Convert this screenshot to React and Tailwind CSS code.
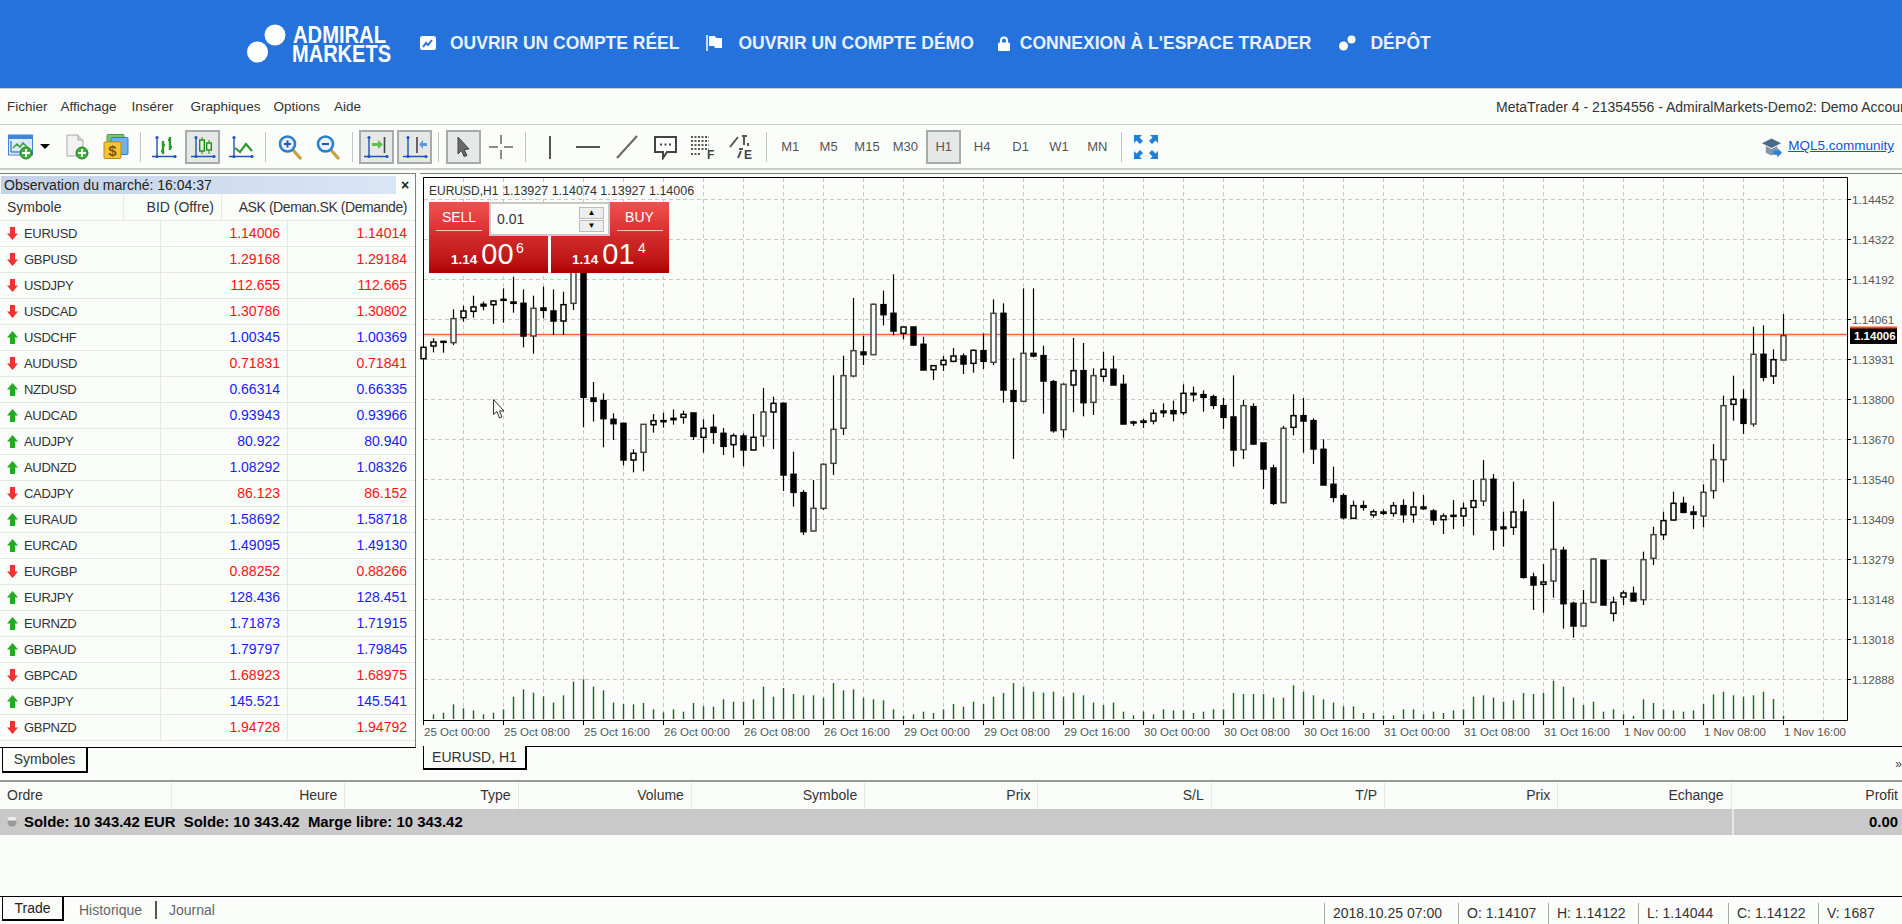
import React from 'react'

// [high, bodyTop, bodyBottom, low, filled] read off the chart, y = 240 + v / 3
const CANDLES_A = [
  [322,322,356,356,0],[295,306,318,337,0],[303,304,306,338,1],[208,236,308,315,0],[197,213,233,245,0],
  [167,201,214,233,0],[185,193,198,211,1],[182,183,194,252,0],[145,178,181,248,1],[110,186,190,218,1],
  [148,190,288,322,1],[167,205,288,341,0],[140,204,211,235,1],[148,213,243,285,1],[155,194,243,285,0],
  [60,60,190,210,0],[60,60,472,562,1],[426,474,484,545,1],[460,482,536,622,1],[520,538,551,600,1],
  [548,550,660,676,1],[628,640,660,697,0],[553,553,637,694,0],[522,542,554,578,0],[518,542,545,563,1],
  [508,535,539,554,1],[512,523,532,551,0],[518,519,589,600,1],[538,565,592,638,0],[523,562,577,612,1],
  [564,580,619,645,1],[580,587,614,653,0],[580,588,630,679,1],[522,592,630,631,0],[444,516,588,620,0],
  [470,490,516,627,0],[487,490,705,753,1],[635,703,757,800,1],[750,758,875,885,1],[720,805,873,875,0],
  [670,673,805,810,0],[406,568,670,705,0],[347,407,565,585,0],[174,332,408,412,0],[287,336,344,375,1],
  [190,193,344,345,0],[152,194,224,256,1],[103,220,273,286,1],[260,261,280,298,0],[260,261,315,318,1],
  [290,313,390,390,1],[375,377,389,420,0],[348,361,374,393,0],[324,348,364,367,0],[340,348,372,402,1],
  [328,331,370,398,0],[280,332,364,387,1],[178,220,367,375,0],[190,220,450,488,1],[354,452,484,657,1],
  [145,340,484,485,0],[145,340,348,352,1],[317,347,423,521,1],[420,425,572,578,1],[430,433,569,593,0],
  [294,392,435,517,0],[309,392,488,529,1],[385,407,487,525,0],[335,388,409,425,0],[347,388,435,435,1],
  [404,433,552,553,1],[542,546,548,558,1],[536,543,547,564,1],[508,520,543,553,0],[490,513,518,532,1],
  [482,512,521,544,1],[433,460,518,526,0],[440,460,464,485,1],[451,464,472,515,1],[464,470,496,507,1],
  [474,497,532,567,1],[406,531,630,680,1],[480,497,629,657,0],[490,500,612,615,1],[609,609,687,747,1],
  [674,684,790,795,1],[558,565,788,790,0],[463,527,562,586,0],[474,527,543,638,1],[535,542,627,672,1],
  [598,628,735,735,1],[680,733,772,787,1],[760,767,833,838,1],[782,797,835,836,0],[782,797,802,812,1],
  [808,815,825,833,0],[808,816,820,825,1],[786,797,820,830,0],[778,797,824,848,1],[755,801,824,848,0],
]

// same shape, y = 450 + v / 3
const CANDLES_B = [
  [135,171,176,180,1],[177,183,210,225,1],[190,198,209,252,0],[150,196,199,237,1],[158,175,198,230,0],
  [90,152,172,256,0],[30,88,153,168,0],[72,88,240,300,1],[185,231,236,290,1],[95,186,232,255,0],
  [148,186,382,386,1],[368,381,405,480,1],[342,396,403,488,0],[155,298,393,443,0],[290,301,461,536,1],
  [455,460,528,563,1],[420,460,528,528,0],[325,327,457,460,0],[330,331,465,465,1],[440,457,490,514,0],
  [421,429,441,465,0],[410,430,453,453,1],[305,329,449,465,0],[230,254,325,345,0],[185,212,254,270,0],
  [125,160,210,213,0],[140,160,187,190,1],[167,186,193,237,1],[103,127,198,232,0],[-18,29,122,146,0],
  [-163,-133,29,97,0],[-223,-152,-137,-88,0],[-182,-152,-80,-48,1],[-370,-287,-78,-70,0],[-374,-287,-218,-206,1],
  [-302,-271,-222,-198,0],[-408,-343,-270,-270,0],
]

const VOLUME = [
  808,793,788,763,775,781,793,788,778,740,718,728,739,758,736,695,688,710,721,758,
  762,763,759,778,787,778,785,759,769,770,748,755,755,748,710,740,714,732,736,736,
  743,699,721,718,743,748,751,778,797,793,785,789,778,762,770,755,762,740,729,699,
  710,725,728,725,740,728,736,758,765,758,785,796,784,793,778,781,781,789,785,778,
  778,729,732,732,732,743,743,706,725,736,748,758,769,769,789,789,796,796,778,778,
  793,785,789,781,778,740,736,743,755,751,729,732,729,692,710,743,765,755,785,778,
  793,797,748,759,778,781,785,781,762,733,725,736,740,736,725,747,797,
]

const PRICES = ['1.14452','1.14322','1.14192','1.14061','1.13931','1.13800','1.13670','1.13540','1.13409','1.13279','1.13148','1.13018','1.12888']

const TIMES = ['25 Oct 00:00','25 Oct 08:00','25 Oct 16:00','26 Oct 00:00','26 Oct 08:00','26 Oct 16:00','29 Oct 00:00','29 Oct 08:00','29 Oct 16:00','30 Oct 00:00','30 Oct 08:00','30 Oct 16:00','31 Oct 00:00','31 Oct 08:00','31 Oct 16:00','1 Nov 00:00','1 Nov 08:00','1 Nov 16:00']

const SYMBOLS = [
  ['EURUSD','1.14006','1.14014',0],['GBPUSD','1.29168','1.29184',0],['USDJPY','112.655','112.665',0],
  ['USDCAD','1.30786','1.30802',0],['USDCHF','1.00345','1.00369',1],['AUDUSD','0.71831','0.71841',0],
  ['NZDUSD','0.66314','0.66335',1],['AUDCAD','0.93943','0.93966',1],['AUDJPY','80.922','80.940',1],
  ['AUDNZD','1.08292','1.08326',1],['CADJPY','86.123','86.152',0],['EURAUD','1.58692','1.58718',1],
  ['EURCAD','1.49095','1.49130',1],['EURGBP','0.88252','0.88266',0],['EURJPY','128.436','128.451',1],
  ['EURNZD','1.71873','1.71915',1],['GBPAUD','1.79797','1.79845',1],['GBPCAD','1.68923','1.68975',0],
  ['GBPJPY','145.521','145.541',1],['GBPNZD','1.94728','1.94792',0],
]

const COLUMNS = ['Heure','Type','Volume','Symbole','Prix','S/L','T/P','Prix','Echange']
const STATUS = [['2018.10.25 07:00','w-[134px]'],['O: 1.14107','w-[90px]'],['H: 1.14122','w-[90px]'],['L: 1.14044','w-[90px]'],['C: 1.14122','w-[90px]'],['V: 1687','w-[84px]']]

function Plus({ x, y, r = 6 }) {
  return (
    <g>
      <circle cx={x} cy={y} r={r} fill="#3fae3a" stroke="#1f7f1f" />
      <path d={`M${x - r + 2} ${y}h${2 * r - 4}M${x} ${y - r + 2}v${2 * r - 4}`} stroke="#fff" strokeWidth="2" />
    </g>
  )
}

function Axes() {
  return (
    <g fill="#1f55b5">
      <path d="M6 3v20M1 22.5h24" stroke="#1f55b5" strokeWidth="1.4" fill="none" />
      <circle cx="6" cy="3.5" r="1.6" />
      <circle cx="6" cy="22.5" r="1.6" />
      <circle cx="24" cy="22.5" r="1.6" />
    </g>
  )
}

function Icon({ children, className = 'w-[26px] h-[26px]' }) {
  return <svg viewBox="0 0 26 26" className={className}>{children}</svg>
}

const Lens = ({ minus }) => (
  <Icon>
    <path d="M16 16l7 8" stroke="#c8a040" strokeWidth="3.4" strokeLinecap="round" />
    <circle cx="10.5" cy="10" r="7.5" fill="#eaf2fb" stroke="#2a7fd0" strokeWidth="2.6" />
    <path d={minus ? 'M7 10h7' : 'M7 10h7M10.5 6.5v7'} stroke="#1f55b5" strokeWidth="2" />
  </Icon>
)

const TOOL_ICONS = {
  newChart: (
    <Icon>
      <rect x="0.5" y="1" width="24" height="20" fill="#dceafa" stroke="#3f86d6" />
      <rect x="0.5" y="1" width="24" height="4" fill="#3f86d6" />
      <path d="M3 7v11h18" stroke="#1f55b5" fill="none" />
      <path d="M5 14l4-4 3 3 3-4 4 4" stroke="#3fa03a" strokeWidth="1.5" fill="none" />
      <Plus x="18" y="19" />
    </Icon>
  ),
  newDoc: (
    <Icon>
      <path d="M2 1h11l5 5v16H2z" fill="#f2f2f2" stroke="#a8a8a8" />
      <path d="M13 1v5h5" fill="#ddd" stroke="#a8a8a8" />
      <Plus x="17" y="19" />
    </Icon>
  ),
  money: (
    <Icon>
      <rect x="4" y="0.5" width="17" height="16" rx="1" fill="#7cc46e" stroke="#4c9b4c" />
      <rect x="8" y="3.5" width="17" height="17" rx="1" fill="#6fb2ea" stroke="#2a7fd0" />
      <rect x="1" y="8" width="17" height="16.5" rx="1" fill="#f4c437" stroke="#b98a18" />
      <text x="9.5" y="22" textAnchor="middle" fontSize="15" fontWeight="700" fill="#7a5608" fontFamily="Liberation Sans">$</text>
    </Icon>
  ),
  bars: (
    <Icon>
      <Axes />
      <path d="M12 7v13M10 17h2M12 11h2M19 3v13M17 6h2M19 13h2" stroke="#2c9a2c" strokeWidth="2.4" fill="none" />
    </Icon>
  ),
  candles: (
    <Icon>
      <Axes />
      <path d="M12 3v17M19 6v14" stroke="#1f8a1f" />
      <rect x="9.7" y="6" width="4.6" height="11" fill="#e8f3d8" stroke="#1f8a1f" strokeWidth="1.4" />
      <rect x="16.7" y="9" width="4.6" height="7" fill="#e8f3d8" stroke="#1f8a1f" strokeWidth="1.4" />
    </Icon>
  ),
  line: (
    <Icon>
      <Axes />
      <path d="M7 14l5 4 6-8 6 7" stroke="#2c9a2c" strokeWidth="2.2" fill="none" />
    </Icon>
  ),
  zoomIn: <Lens />,
  zoomOut: <Lens minus />,
  autoScroll: (
    <Icon>
      <Axes />
      <path d="M21.5 3v16" stroke="#444" strokeWidth="1.6" />
      <path d="M9 9h6V6l5 4.500-5 4.500v-3H9z" fill="#5cc04c" />
    </Icon>
  ),
  chartShift: (
    <Icon>
      <Axes />
      <path d="M15 3v16" stroke="#444" strokeWidth="1.6" />
      <path d="M25 9h-4V6l-4 4.500 4 4.500v-3h4z" fill="#5a9ae0" />
    </Icon>
  ),
  cursor: (
    <Icon>
      <path d="M8 3l11 12-5 .5 3 6-3 1-2.500-6-3.500 3.500z" fill="#6a6a6a" stroke="#444" />
    </Icon>
  ),
  cross: (
    <Icon>
      <path d="M13 1v9M13 16v9M1 13h9M16 13h9" stroke="#666" strokeWidth="1.5" />
    </Icon>
  ),
  vline: <Icon><path d="M13 2v23" stroke="#555" strokeWidth="2" /></Icon>,
  hline: <Icon><path d="M1 13h24" stroke="#555" strokeWidth="2" /></Icon>,
  trend: <Icon><path d="M3 24L23 2" stroke="#666" strokeWidth="2" /></Icon>,
  bubble: (
    <Icon>
      <path d="M3 3h21v15H15l-4 6v-6H3z" fill="#fff" stroke="#444" strokeWidth="2" />
      <path d="M8 10.500h2M12.500 10.500h2M17 10.500h2" stroke="#444" strokeWidth="2" />
    </Icon>
  ),
  fibGrid: (
    <Icon>
      <path d="M1 3h18M1 7h18M1 11h18M1 15h18M1 20h10" stroke="#555" strokeWidth="2" strokeDasharray="2 1.500" />
      <text x="17" y="25" fontSize="12" fontWeight="700" fill="#444" fontFamily="Liberation Sans">F</text>
    </Icon>
  ),
  fibE: (
    <Icon>
      <path d="M1 13L9 3M13 2h5M15 2v9M19 9v3M9 24l3-7M10 15h4" stroke="#555" strokeWidth="2" fill="none" />
      <text x="15" y="25" fontSize="12" fontWeight="700" fill="#444" fontFamily="Liberation Sans">E</text>
    </Icon>
  ),
  full: (
    <Icon>
      <path d="M1 1h8L6.500 3.500 10 7 7 10 3.500 6.500 1 9zM25 1h-8l2.500 2.500L16 7l3 3 3.500-3.500L25 9zM1 25h8l-2.500-2.500L10 19l-3-3-3.500 3.500L1 17zM25 25h-8l2.500-2.500L16 19l3-3 3.500 3.500L25 17z" fill="#1f7fdc" />
    </Icon>
  ),
}

function Tool({ icon, active }) {
  return (
    <div className="flex h-[34px] w-[38.4px] shrink-0 items-center justify-center">
      <div className={`flex h-[34px] w-[35px] items-center justify-center ${active ? 'border-2 border-[#aaaaaa] bg-[#e6e8e8]' : ''}`}>
        {TOOL_ICONS[icon]}
      </div>
    </div>
  )
}

function Period({ label, active }) {
  return (
    <div className="flex h-[34px] w-[38.4px] shrink-0 items-center justify-center">
      <div className={`flex h-[34px] w-[35px] items-center justify-center text-[13px] text-[#555] ${active ? 'border-2 border-[#aaaaaa] bg-[#e6e8e8]' : ''}`}>{label}</div>
    </div>
  )
}

function Sep() {
  return (
    <div className="flex h-[30px] w-[10px] shrink-0 justify-center">
      <div className="w-px bg-[#c4c4c4]" />
    </div>
  )
}

function Candle({ i, d, base }) {
  const x = 423.5 + i * 10
  const y = (v) => base + v / 3
  const h = Math.max(y(d[2]) - y(d[1]), 1)
  const color = d[2] - d[1] > 60 && !d[4] ? '#444' : '#000'
  return (
    <g>
      <path d={`M${x} ${y(d[0])}V${y(d[3])}`} stroke="#000" strokeWidth="1.2" />
      <rect
        x={x - 2.5}
        y={y(d[1])}
        width={5}
        height={h}
        fill={d[4] ? '#000' : '#fbfdfb'}
        stroke={color}
        strokeWidth="1.500"
      />
    </g>
  )
}

function Chart() {
  const gridY = PRICES.map((_, i) => 199.5 + i * 40)
  const gridX = Array.from({ length: 35 }, (_, i) => 463.5 + i * 40)
  return (
    <svg viewBox="420 174 1482 572" className="ml-[4px] block h-[572px] w-[1482px] shrink-0">
      <g stroke="#c8c8c8" strokeDasharray="4 3">
        {gridY.map((y) => <path key={y} d={`M424 ${y}H1847`} />)}
        {gridX.map((x) => <path key={x} d={`M${x} 178V720`} />)}
      </g>
      <path d="M423.500 177.500H1847.500V720.500H423.500Z" fill="none" stroke="#000" />
      <text x="429" y="194.500" fontSize="12" fill="#333" fontFamily="Liberation Sans">EURUSD,H1</text>
      <text x="503" y="194.500" fontSize="12.500" fill="#333" fontFamily="Liberation Sans">1.13927 1.14074 1.13927 1.14006</text>
      {TIMES.map((t, i) => (
        <g key={t}>
          <path d={`M${423.5 + i * 80} 720v5`} stroke="#000" />
          <text x={424 + i * 80} y={736} fontSize="11.5" fill="#555" fontFamily="Liberation Sans">{t}</text>
        </g>
      ))}
      {PRICES.map((p, i) => (
        <g key={p}>
          <path d={`M1847 ${gridY[i]}h4`} stroke="#000" />
          <text x={1852} y={gridY[i] + 4.5} fontSize="11.7" fill="#555" fontFamily="Liberation Sans">{p}</text>
        </g>
      ))}
      {VOLUME.map((v, i) => (
        <path key={i} d={`M${423.5 + i * 10} 719V${450 + v / 3}`} stroke="#0c6e0c" strokeWidth="1.400" />
      ))}
      <path d="M424 334.500H1847" stroke="#ff6436" strokeWidth="1.500" />
      <path d="M424 336H1847" stroke="#d4d4d4" />
      {CANDLES_A.map((d, i) => <Candle key={i} i={i} d={d} base={240} />)}
      {CANDLES_B.map((d, i) => <Candle key={i} i={i + 100} d={d} base={450} />)}
      <rect x="1850" y="327" width="47" height="17" fill="#000" />
      <rect x="1850" y="326.500" width="47" height="2" fill="#ff4a1a" />
      <text x="1854" y="340" fontSize="11.500" fontWeight="700" fill="#fff" fontFamily="Liberation Sans">1.14006</text>
      <path d="M493.500 399.500v15l3.500-3 2.500 6.500 2.500-1-2.500-6h4.500z" fill="#fbfdfb" stroke="#333" />
    </svg>
  )
}

function Ticket() {
  return (
    <div className="absolute left-[13px] top-[32px] flex w-[240px] flex-col text-white">
      <div className="flex h-[34px]">
        <div className="flex w-[60px] flex-col items-center bg-linear-to-b from-[#f25050] to-[#d42c2c] pt-[7px]">
          <span className="text-[14px] leading-4">SELL</span>
          <div className="mt-[5px] h-px w-[46px] bg-[#f8c8c8]" />
        </div>
        <div className="flex w-[121px] items-center border-2 border-[#c8c8c8] bg-[#fbfdfb] pl-[6px] text-[14px] text-[#333]">
          <span className="flex-1">0.01</span>
          <div className="mr-[4px] flex w-[25px] flex-col gap-px">
            <div className="flex h-[12px] items-center justify-center border border-[#bbb] bg-[#eee] text-[8px] leading-none text-black">▲</div>
            <div className="flex h-[12px] items-center justify-center border border-[#bbb] bg-[#eee] text-[8px] leading-none text-black">▼</div>
          </div>
        </div>
        <div className="flex w-[59px] flex-col items-center bg-linear-to-b from-[#f25050] to-[#d42c2c] pt-[7px]">
          <span className="text-[14px] leading-4">BUY</span>
          <div className="mt-[5px] h-px w-[46px] bg-[#f8c8c8]" />
        </div>
      </div>
      <div className="flex h-[37px] justify-between">
        <Quote pre="1.14" big="00" sup="6" className="w-[119px] pl-[22px]" />
        <Quote pre="1.14" big="01" sup="4" className="w-[118px] pl-[21px]" />
      </div>
    </div>
  )
}

function Quote({ pre, big, sup, className }) {
  return (
    <div className={`relative flex items-baseline bg-linear-to-b from-[#d02a2a] via-[#c41c1c] to-[#ae0000] ${className}`}>
      <span className="text-[13.500px] font-bold leading-[36px]">{pre}</span>
      <span className="ml-[4px] text-[29px] leading-[36px]">{big}</span>
      <span className="absolute left-[87px] top-[4px] text-[14px] leading-4">{sup}</span>
    </div>
  )
}

function MarketWatch() {
  return (
    <div className="flex w-[416px] shrink-0 flex-col">
      <div className="mt-[3px] flex h-[574px] flex-col border-r border-t border-[#808080] pt-[2px]">
        <div className="flex h-[18px] shrink-0 items-center">
          <div className="ml-px flex h-[18px] w-[395px] items-center bg-linear-to-r from-[#c3d2e6] to-[#d9e6f6] pl-[3px] text-[14px] text-[#222]">
            Observation du marché: 16:04:37
          </div>
          <span className="ml-[5px] text-[14px] font-bold leading-none text-[#222]">×</span>
        </div>
        <div className="grid h-[27px] shrink-0 grid-cols-[124px_98px_192px] items-center border-b border-[#e6e8e6] text-[14px] text-[#333]">
          <div className="flex h-full items-center border-r border-[#e6e8e6] pl-[7px]">Symbole</div>
          <div className="flex h-full items-center justify-end border-r border-[#e6e8e6] pr-[7px]">BID (Offre)</div>
          <div className="flex h-full items-center justify-end whitespace-nowrap pr-[7px] tracking-[-0.43px]">ASK (Deman.SK (Demande)</div>
        </div>
        {SYMBOLS.map(([name, bid, ask, up]) => (
          <div key={name} className={`grid h-[26px] shrink-0 grid-cols-[161px_127px_126px] items-center border-b border-[#e6e8e6] text-[14px] ${up ? 'text-[#1a1aff]' : 'text-[#ff1010]'}`}>
            <div className="flex h-full items-center gap-[6px] border-r border-[#e6e8e6] pl-[7px] text-[13px] tracking-[-0.3px] text-[#333]">
              <svg viewBox="0 0 11 13" className="h-[13px] w-[11px]">
                {up
                  ? <path d="M5.500 0L11 6.500H8V13H3V6.500H0z" fill="#22aa22" />
                  : <path d="M5.500 13L11 6.500H8V0H3V6.500H0z" fill="#ee3333" />}
              </svg>
              {name}
            </div>
            <div className="flex h-full items-center justify-end border-r border-[#e6e8e6] pr-[7px]">{bid}</div>
            <div className="pr-[7px] text-right">{ask}</div>
          </div>
        ))}
      </div>
      <div className="flex h-[33px] shrink-0 border-t border-black">
        <div className="ml-[2px] flex h-[25px] w-[86px] items-center justify-center border-x border-b-2 border-black border-r-2 text-[14px] text-[#333]">Symboles</div>
      </div>
    </div>
  )
}

function ChartPane() {
  return (
    <div className="relative flex min-w-0 flex-1 flex-col">
      <div className="ml-[4px] mt-[3px] h-px shrink-0 bg-[#808080]" />
      <Chart />
      <Ticket />
      <div className="flex h-[34px] shrink-0 items-start pl-[7px]">
        <div className="flex h-[24px] w-[104px] items-center justify-center border-x border-b-2 border-black border-r-2 bg-[#fbfdfb] text-[14px] text-[#333]">EURUSD, H1</div>
        <div className="h-px flex-1 bg-black" />
        <span className="absolute bottom-[10px] right-0 text-[12px] leading-none text-[#444]">»</span>
      </div>
    </div>
  )
}

function TradePanel() {
  return (
    <div className="flex h-[116px] shrink-0 flex-col border-t-2 border-[#999]">
      <div className="grid h-[27px] shrink-0 grid-cols-[172px_repeat(9,173.300px)_1fr] items-center text-[14px] text-[#333]">
        <div className="flex h-full items-center border-r border-[#e6e8e6] pl-[7px]">Ordre</div>
        {COLUMNS.map((c, i) => (
          <div key={i} className="flex h-full items-center justify-end border-r border-[#e6e8e6] pr-[7px]">{c}</div>
        ))}
        <div className="pr-[4px] text-right">Profit</div>
      </div>
      <div className="flex h-[26px] shrink-0 items-center bg-[#c8c9c8] text-[14.900px] font-bold text-black">
        <svg viewBox="0 0 10 10" className="ml-[7px] h-[10px] w-[10px]">
          <circle cx="5" cy="5" r="4.500" fill="#999" />
          <path d="M0.500 3.500h9A4.500 4.500 0 0 0 .5 3.500" fill="#eee" />
        </svg>
        <span className="ml-[7px] flex-1 whitespace-pre">Solde: 10 343.42 EUR  Solde: 10 343.42  Marge libre: 10 343.42</span>
        <div className="flex h-full w-[170px] items-center justify-end border-l-2 border-[#e8e8e8] pr-[4px]">0.00</div>
      </div>
    </div>
  )
}

function BottomBar() {
  return (
    <div className="flex h-[28px] shrink-0 border-t border-black">
      <div className="ml-[2px] flex h-[24px] w-[62px] items-center justify-center border-x border-b-2 border-black border-r-2 text-[14px] text-[#222]">Trade</div>
      <span className="ml-[15px] self-center text-[14px] text-[#666]">Historique</span>
      <div className="ml-[13px] mt-[4px] h-[18px] w-0.5 bg-[#555]" />
      <span className="ml-[12px] self-center text-[14px] text-[#666]">Journal</span>
      <div className="ml-auto flex items-stretch">
        {STATUS.map(([t, w]) => (
          <div key={t} className={`mt-[6px] flex h-[21px] items-center border-l border-[#aaa] pl-[8px] text-[14px] text-[#333] ${w}`}>{t}</div>
        ))}
      </div>
    </div>
  )
}

function Nav({ icon, label, className }) {
  return (
    <div className={`flex items-center ${className}`}>
      {icon}
      <span className="whitespace-nowrap text-[17.500px] font-bold text-[#eaf1fb]">{label}</span>
    </div>
  )
}

function Header() {
  return (
    <div className="flex h-[88px] shrink-0 items-center bg-[#2672dc] pb-[2px] pl-[247px]">
      <svg viewBox="0 0 146 42" className="h-[42px] w-[146px] shrink-0 overflow-visible">
        <circle cx="28" cy="13" r="10.500" fill="#fff" />
        <circle cx="10.500" cy="30" r="10.500" fill="#fff" />
        <text x="46" y="21" fontSize="24" fontWeight="700" fill="#fff" textLength="93" lengthAdjust="spacingAndGlyphs" fontFamily="Liberation Sans">ADMIRAL</text>
        <text x="45" y="40" fontSize="24" fontWeight="700" fill="#fff" textLength="99" lengthAdjust="spacingAndGlyphs" fontFamily="Liberation Sans">MARKETS</text>
      </svg>
      <Nav
        className="ml-[27px]"
        label="OUVRIR UN COMPTE RÉEL"
        icon={
          <svg viewBox="0 0 16 14" className="mr-[14px] h-[14px] w-[16px]">
            <rect width="16" height="14" rx="2.500" fill="#fff" />
            <path d="M3 11l3-4 2 2 4-5" stroke="#2672dc" strokeWidth="2" fill="none" />
          </svg>
        }
      />
      <Nav
        className="ml-[27px]"
        label="OUVRIR UN COMPTE DÉMO"
        icon={
          <svg viewBox="0 0 17 16" className="mr-[15px] h-[16px] w-[17px]">
            <path d="M1 0v16" stroke="#fff" strokeWidth="1.500" />
            <path d="M3 1h6l1 2h6v10H9l-1-2H3z" fill="#fff" />
          </svg>
        }
      />
      <Nav
        className="ml-[23px]"
        label="CONNEXION À L'ESPACE TRADER"
        icon={
          <svg viewBox="0 0 14 15" className="mr-[9px] h-[15px] w-[14px]">
            <path d="M4 7V4.500a3 3 0 0 1 6 0V7" stroke="#fff" strokeWidth="2" fill="none" />
            <rect x="1" y="6.500" width="12" height="8.500" rx="1.500" fill="#fff" />
          </svg>
        }
      />
      <Nav
        className="ml-[28px]"
        label="DÉPÔT"
        icon={
          <svg viewBox="0 0 17 16" className="mr-[14px] h-[16px] w-[17px]">
            <circle cx="12.500" cy="4.500" r="4" fill="#fff" />
            <circle cx="4.500" cy="11" r="4.500" fill="#fff" />
          </svg>
        }
      />
    </div>
  )
}

export default function App() {
  return (
    <div className="flex h-[924px] w-[1902px] flex-col overflow-hidden bg-[#fbfdfb] font-['Liberation_Sans',sans-serif]">
      <Header />

      {/* menu */}
      <div className="flex h-[37px] shrink-0 items-center whitespace-nowrap border-y border-[#cccccc] pl-[7px] pt-px text-[13.500px] text-[#333]">
        <span>Fichier</span>
        <span className="ml-[13px]">Affichage</span>
        <span className="ml-[15px]">Insérer</span>
        <span className="ml-[17px]">Graphiques</span>
        <span className="ml-[13px]">Options</span>
        <span className="ml-[14px]">Aide</span>
        <span className="ml-auto w-[406px] overflow-hidden text-[14px] text-[#333]">MetaTrader 4 - 21354556 - AdmiralMarkets-Demo2: Demo Account</span>
      </div>

      {/* toolbar */}
      <div className="flex h-[45px] shrink-0 items-center border-b-2 border-[#cccccc] pl-[2px]">
        <Tool icon="newChart" />
        <div className="mr-[8px] h-0 w-[10px] border-x-[5px] border-t-[5px] border-x-transparent border-t-black" />
        <Tool icon="newDoc" />
        <Tool icon="money" />
        <Sep />
        <Tool icon="bars" />
        <Tool icon="candles" active />
        <Tool icon="line" />
        <Sep />
        <Tool icon="zoomIn" />
        <Tool icon="zoomOut" />
        <Sep />
        <Tool icon="autoScroll" active />
        <Tool icon="chartShift" active />
        <Sep />
        <Tool icon="cursor" active />
        <Tool icon="cross" />
        <Sep />
        <Tool icon="vline" />
        <Tool icon="hline" />
        <Tool icon="trend" />
        <Tool icon="bubble" />
        <Tool icon="fibGrid" />
        <Tool icon="fibE" />
        <Sep />
        {['M1', 'M5', 'M15', 'M30', 'H1', 'H4', 'D1', 'W1', 'MN'].map((m) => <Period key={m} label={m} active={m === 'H1'} />)}
        <Sep />
        <Tool icon="full" />
        <div className="ml-auto mr-[8px] flex items-center gap-[6px]">
          <svg viewBox="0 0 22 22" className="h-[22px] w-[21px]">
            <path d="M1 7l10-5 10 5-10 5z" fill="#4a6a8a" />
            <path d="M5 10v7l6 3 6-3v-7l-6 3z" fill="#7f97ad" />
            <path d="M13 15h4v-3l5 5-5 5v-3h-4z" fill="#2a7fd0" />
          </svg>
          <span className="text-[13.500px] text-[#1155cc] underline">MQL5.community</span>
        </div>
      </div>

      <div className="flex h-[610px] shrink-0">
        <MarketWatch />
        <ChartPane />
      </div>
      <TradePanel />
      <BottomBar />
    </div>
  )
}
